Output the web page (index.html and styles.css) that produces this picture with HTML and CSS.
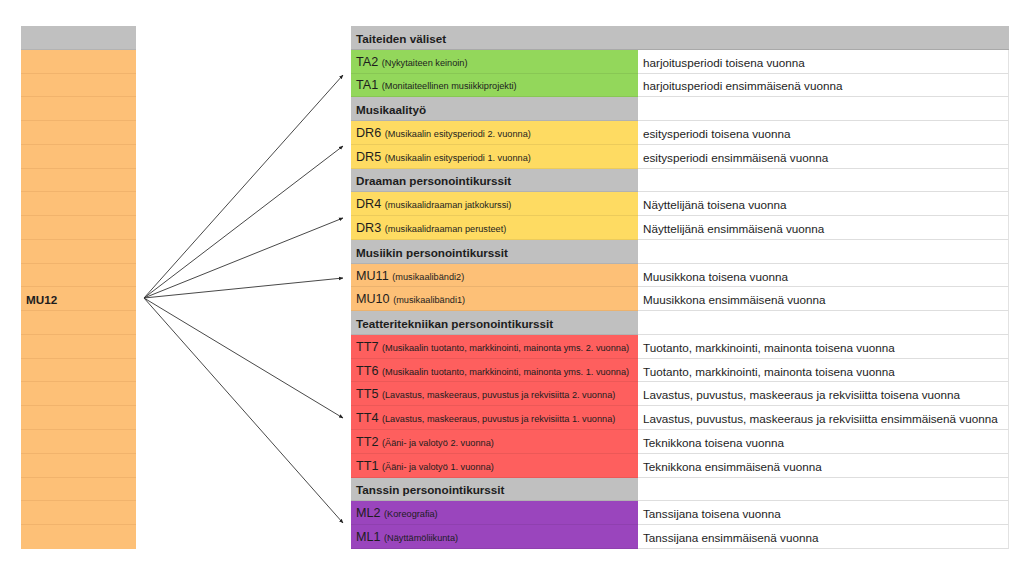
FILE: index.html
```html
<!DOCTYPE html>
<html lang="fi">
<head>
<meta charset="utf-8">
<title>Kurssit</title>
<link rel="stylesheet" href="styles.css">
</head>
<body>
<div class="page">
  <div class="side">
    <div class="side-row side-head"></div>
    <div class="side-row"></div>
    <div class="side-row"></div>
    <div class="side-row"></div>
    <div class="side-row"></div>
    <div class="side-row"></div>
    <div class="side-row"></div>
    <div class="side-row"></div>
    <div class="side-row"></div>
    <div class="side-row"></div>
    <div class="side-row"></div>
    <div class="side-row side-label">MU12</div>
    <div class="side-row"></div>
    <div class="side-row"></div>
    <div class="side-row"></div>
    <div class="side-row"></div>
    <div class="side-row"></div>
    <div class="side-row"></div>
    <div class="side-row"></div>
    <div class="side-row"></div>
    <div class="side-row"></div>
    <div class="side-row"></div>
  </div>

  <div class="table">
    <div class="row sec"><div class="c1">Taiteiden väliset</div><div class="c2 gray"></div></div>
    <div class="row green"><div class="c1"><span class="lbl"><span class="code">TA2</span> <span class="sub">(Nykytaiteen keinoin)</span></span></div><div class="c2">harjoitusperiodi toisena vuonna</div></div>
    <div class="row green"><div class="c1"><span class="lbl"><span class="code">TA1</span> <span class="sub">(Monitaiteellinen musiikkiprojekti)</span></span></div><div class="c2">harjoitusperiodi ensimmäisenä vuonna</div></div>
    <div class="row sec"><div class="c1">Musikaalityö</div><div class="c2"></div></div>
    <div class="row yellow"><div class="c1"><span class="lbl"><span class="code">DR6</span> <span class="sub">(Musikaalin esitysperiodi 2. vuonna)</span></span></div><div class="c2">esitysperiodi toisena vuonna</div></div>
    <div class="row yellow"><div class="c1"><span class="lbl"><span class="code">DR5</span> <span class="sub">(Musikaalin esitysperiodi 1. vuonna)</span></span></div><div class="c2">esitysperiodi ensimmäisenä vuonna</div></div>
    <div class="row sec"><div class="c1">Draaman personointikurssit</div><div class="c2"></div></div>
    <div class="row yellow"><div class="c1"><span class="lbl"><span class="code">DR4</span> <span class="sub">(musikaalidraaman jatkokurssi)</span></span></div><div class="c2">Näyttelijänä toisena vuonna</div></div>
    <div class="row yellow"><div class="c1"><span class="lbl"><span class="code">DR3</span> <span class="sub">(musikaalidraaman perusteet)</span></span></div><div class="c2">Näyttelijänä ensimmäisenä vuonna</div></div>
    <div class="row sec"><div class="c1">Musiikin personointikurssit</div><div class="c2"></div></div>
    <div class="row orange"><div class="c1"><span class="lbl"><span class="code">MU11</span> <span class="sub">(musikaalibändi2)</span></span></div><div class="c2">Muusikkona toisena vuonna</div></div>
    <div class="row orange"><div class="c1"><span class="lbl"><span class="code">MU10</span> <span class="sub">(musikaalibändi1)</span></span></div><div class="c2">Muusikkona ensimmäisenä vuonna</div></div>
    <div class="row sec"><div class="c1">Teatteritekniikan personointikurssit</div><div class="c2"></div></div>
    <div class="row red"><div class="c1"><span class="lbl"><span class="code">TT7</span> <span class="sub">(Musikaalin tuotanto, markkinointi, mainonta yms. 2. vuonna)</span></span></div><div class="c2">Tuotanto, markkinointi, mainonta toisena vuonna</div></div>
    <div class="row red"><div class="c1"><span class="lbl"><span class="code">TT6</span> <span class="sub">(Musikaalin tuotanto, markkinointi, mainonta yms. 1. vuonna)</span></span></div><div class="c2">Tuotanto, markkinointi, mainonta toisena vuonna</div></div>
    <div class="row red"><div class="c1"><span class="lbl"><span class="code">TT5</span> <span class="sub">(Lavastus, maskeeraus, puvustus ja rekvisiitta 2. vuonna)</span></span></div><div class="c2">Lavastus, puvustus, maskeeraus ja rekvisiitta toisena vuonna</div></div>
    <div class="row red"><div class="c1"><span class="lbl"><span class="code">TT4</span> <span class="sub">(Lavastus, maskeeraus, puvustus ja rekvisiitta 1. vuonna)</span></span></div><div class="c2">Lavastus, puvustus, maskeeraus ja rekvisiitta ensimmäisenä vuonna</div></div>
    <div class="row red"><div class="c1"><span class="lbl"><span class="code">TT2</span> <span class="sub">(Ääni- ja valotyö 2. vuonna)</span></span></div><div class="c2">Teknikkona toisena vuonna</div></div>
    <div class="row red"><div class="c1"><span class="lbl"><span class="code">TT1</span> <span class="sub">(Ääni- ja valotyö 1. vuonna)</span></span></div><div class="c2">Teknikkona ensimmäisenä vuonna</div></div>
    <div class="row sec"><div class="c1">Tanssin personointikurssit</div><div class="c2"></div></div>
    <div class="row purple"><div class="c1"><span class="lbl"><span class="code">ML2</span> <span class="sub">(Koreografia)</span></span></div><div class="c2">Tanssijana toisena vuonna</div></div>
    <div class="row purple"><div class="c1"><span class="lbl"><span class="code">ML1</span> <span class="sub">(Näyttämöliikunta)</span></span></div><div class="c2">Tanssijana ensimmäisenä vuonna</div></div>
  </div>

  <svg class="arrows" width="1023" height="574" viewBox="0 0 1023 574">
    <defs>
      <marker id="ah" viewBox="0 0 10 10" refX="9" refY="5" markerWidth="5" markerHeight="5" orient="auto-start-reverse">
        <path d="M0 1 L10 5 L0 9 Z" fill="#222"/>
      </marker>
    </defs>
    <g stroke="#333" stroke-width="0.9" fill="none" marker-end="url(#ah)">
      <line x1="144" y1="298" x2="343" y2="75"/>
      <line x1="144" y1="298" x2="343" y2="146"/>
      <line x1="144" y1="298" x2="343" y2="218"/>
      <line x1="144" y1="298" x2="343" y2="278"/>
      <line x1="144" y1="298" x2="343" y2="418"/>
      <line x1="144" y1="298" x2="343" y2="523"/>
    </g>
  </svg>
</div>
</body>
</html>
```

FILE: styles.css
```css
* { box-sizing: border-box; }
html, body { margin: 0; padding: 0; background: #fff; }
body {
  font-family: "Liberation Sans", Arial, Helvetica, sans-serif;
  color: #1d1d1d;
  width: 1023px;
  height: 574px;
  overflow: hidden;
}
.page {
  position: relative;
  width: 1023px;
  height: 574px;
  display: flex;
  align-items: flex-start;
  padding: 26px 0 0 21px;
}
.side {
  width: 115px;
  display: flex;
  flex-direction: column;
  flex: none;
}
.side-row {
  height: 23.77px;
  background: #fdc077;
  border-bottom: 1px solid #f1b36c;
  display: flex;
  align-items: center;
  padding: 2px 0 0 5px;
}
.side-row:last-child { border-bottom: none; }
.side-head { background: #c0c0c0; border-bottom: 1px solid #b3b3b3; }
.side-label { font-weight: bold; font-size: 11.7px; }

.table {
  margin-left: 215px;
  width: 658px;
  display: flex;
  flex-direction: column;
  flex: none;
}
.row {
  display: flex;
  height: 23.77px;
}
.c1, .c2 {
  display: flex;
  align-items: center;
  padding: 2px 0 0 5px;
  white-space: nowrap;
  border-bottom: 1px solid rgba(0,0,0,0.07);
}
.c1 { width: 287px; flex: none; }
.c2 {
  flex: 1;
  background: #fff;
  font-size: 11.7px;
  border-bottom: 1px solid #dedede;
  border-right: 1px solid #e2e2e2;
}
.sec .c1 {
  background: #c0c0c0;
  font-weight: bold;
  font-size: 11.7px;
}
.c2.gray { background: #c0c0c0; border-right: none; border-bottom: 1px solid #a9a9a9; }
.row:first-child .c1 { border-bottom: 1px solid #a9a9a9; }
.lbl { display: block; line-height: 16px; font-size: 9.2px; }
.code { font-size: 12.6px; margin-right: 1px; }
.sub { font-size: 9.2px; }
.green .c1 { background: #93d75b; }
.yellow .c1 { background: #fedb62; }
.orange .c1 { background: #fdc077; }
.red .c1 { background: #fe5f5e; }
.purple .c1 { background: #9a45bd; }
.arrows {
  position: absolute;
  left: 0;
  top: 0;
  pointer-events: none;
}
```
